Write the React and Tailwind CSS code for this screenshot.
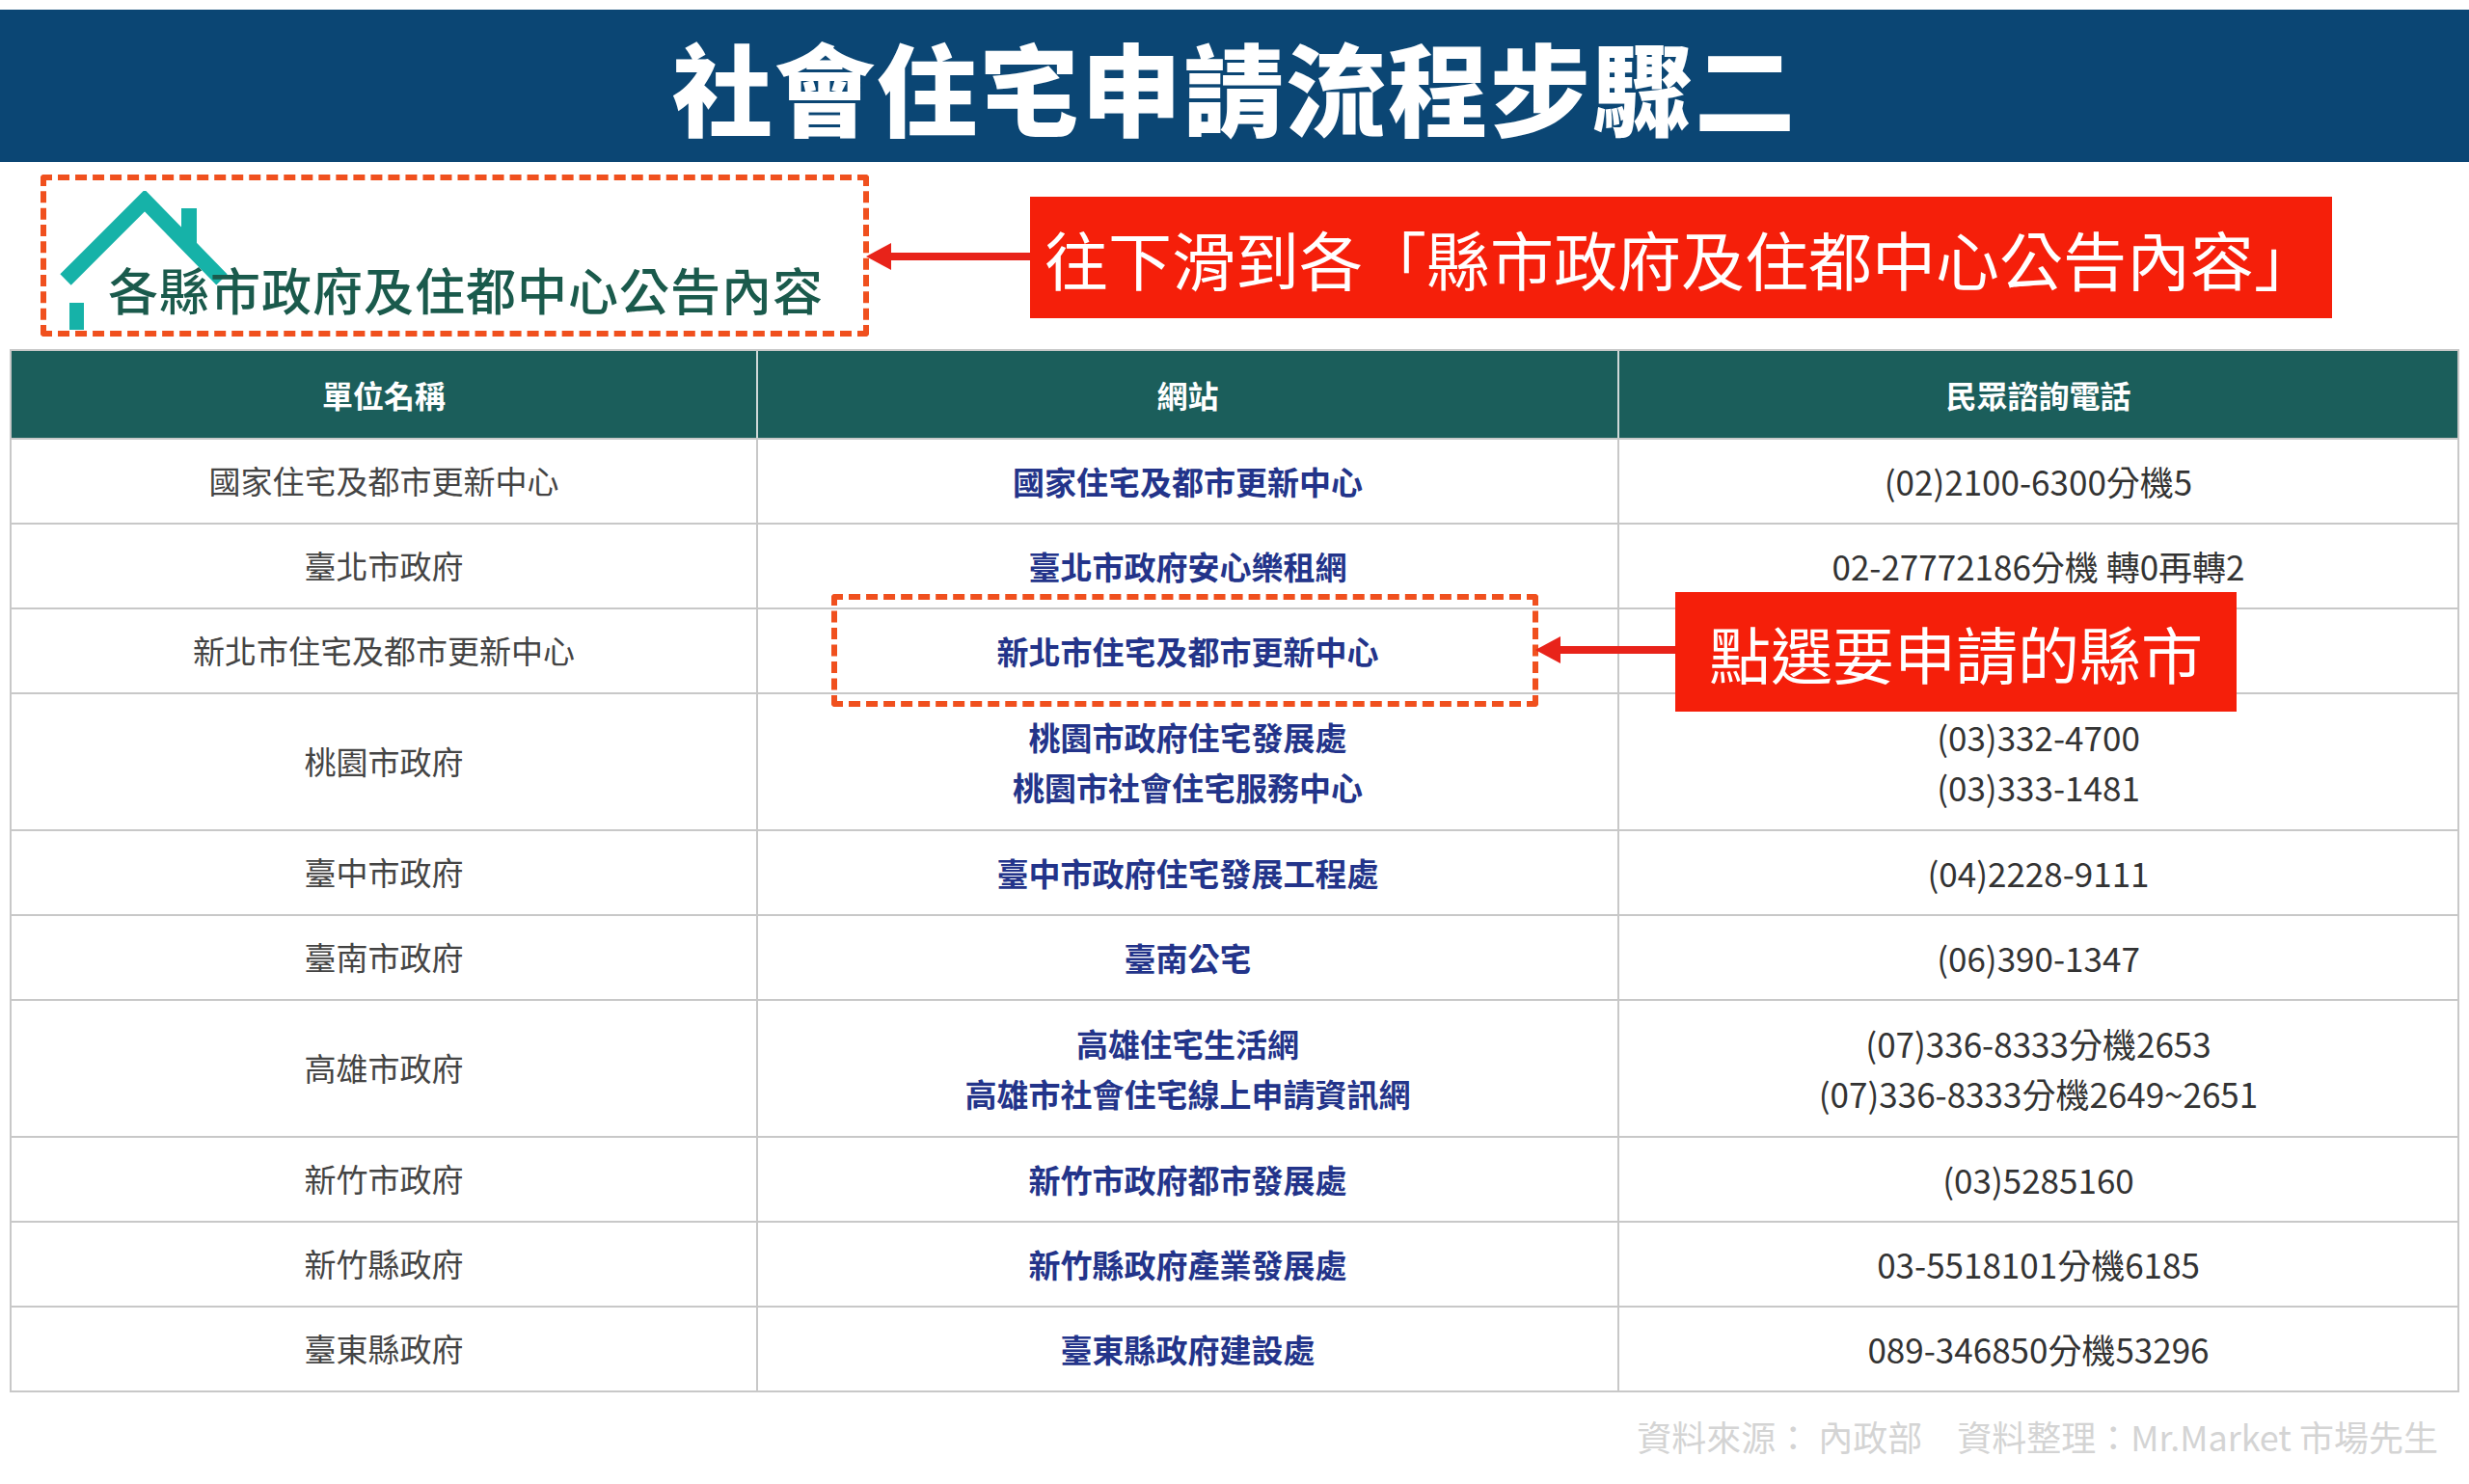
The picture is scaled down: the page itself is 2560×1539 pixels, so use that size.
const rows = [
  { name: '國家住宅及都市更新中心', site: ['國家住宅及都市更新中心'], tel: ['(02)2100-6300分機5'] },
  { name: '臺北市政府', site: ['臺北市政府安心樂租網'], tel: ['02-27772186分機 轉0再轉2'] },
  { name: '新北市住宅及都市更新中心', site: ['新北市住宅及都市更新中心'], tel: [''] },
  { name: '桃園市政府', site: ['桃園市政府住宅發展處', '桃園市社會住宅服務中心'], tel: ['(03)332-4700', '(03)333-1481'] },
  { name: '臺中市政府', site: ['臺中市政府住宅發展工程處'], tel: ['(04)2228-9111'] },
  { name: '臺南市政府', site: ['臺南公宅'], tel: ['(06)390-1347'] },
  { name: '高雄市政府', site: ['高雄住宅生活網', '高雄市社會住宅線上申請資訊網'], tel: ['(07)336-8333分機2653', '(07)336-8333分機2649~2651'] },
  { name: '新竹市政府', site: ['新竹市政府都市發展處'], tel: ['(03)5285160'] },
  { name: '新竹縣政府', site: ['新竹縣政府產業發展處'], tel: ['03-5518101分機6185'] },
  { name: '臺東縣政府', site: ['臺東縣政府建設處'], tel: ['089-346850分機53296'] },
]

const font = { fontFamily: '"Noto Sans CJK TC", "Noto Sans", sans-serif' }

function Arrow({ className }) {
  return (
    <div className={`absolute flex items-center ${className}`}>
      <div className="w-0 h-0 border-y-[14px] border-y-transparent border-r-[26px] border-r-[#e8231a]" />
      <div className="flex-1 h-[8px] bg-[#e8231a]" />
    </div>
  )
}

export default function App() {
  return (
    <div className="relative w-[2560px] h-[1539px] bg-white overflow-hidden" style={font}>
      <div className="pt-[10px]">
        <div className="h-[158px] bg-[#0b4674] flex items-center justify-center">
          <h1 className="text-white font-black text-[104px] leading-none tracking-[2px]">社會住宅申請流程步驟二</h1>
        </div>
      </div>

      {/* section label */}
      <div className="h-[194px] relative">
        <svg className="absolute left-[60px] top-[30px]" width="180" height="144" viewBox="0 0 180 144">
          <polyline points="8,92 90,10 170,92" fill="none" stroke="#16b2a8" strokeWidth="16" strokeLinejoin="miter" />
          <rect x="128" y="18" width="16" height="40" fill="#16b2a8" />
          <rect x="12" y="116" width="15" height="54" fill="#16b2a8" />
        </svg>
        <div className="absolute left-[112px] top-[106px] text-[52px] leading-none font-medium text-[#1a5a4c] tracking-[1px]">各縣市政府及住都中心公告內容</div>
      </div>

      <div className="mx-[10px] border-2 border-[#c8c8c8]">
        <div className="grid grid-cols-[774px_893px_1fr] h-[90px] bg-[#1b5e5b] text-white font-bold text-[32px]">
          <div className="flex items-center justify-center border-r-2 border-[#cfd8d8]">單位名稱</div>
          <div className="flex items-center justify-center border-r-2 border-[#cfd8d8]">網站</div>
          <div className="flex items-center justify-center">民眾諮詢電話</div>
        </div>
        {rows.map((r, i) => (
          <div key={i} className={`grid grid-cols-[774px_893px_1fr] border-t-2 border-[#c8c8c8] ${r.site.length > 1 ? 'h-[142px]' : 'h-[88px]'}`}>
            <div className="flex items-center justify-center border-r-2 border-[#c8c8c8] text-[33px] text-[#444]">{r.name}</div>
            <div className="flex flex-col items-center justify-center border-r-2 border-[#c8c8c8] text-[33px] font-bold text-[#23348a] leading-[52px]">
              {r.site.map(s => <div key={s}>{s}</div>)}
            </div>
            <div className="flex flex-col items-center justify-center text-[35px] text-[#333] leading-[52px]">
              {r.tel.map((t, j) => <div key={j}>{t}</div>)}
            </div>
          </div>
        ))}
      </div>

      <div className="pr-[32px] pt-[18px] text-right text-[36px] text-[#d4d4d4]">資料來源： 內政部　資料整理：Mr.Market 市場先生</div>

      {/* annotations */}
      <div className="absolute left-[42px] top-[181px] w-[859px] h-[168px] border-[6px] border-dashed border-[#f0501e] rounded-[4px]" />
      <Arrow className="left-[898px] top-[252px] w-[172px]" />
      <div className="absolute left-[1068px] top-[204px] w-[1350px] h-[126px] bg-[#f51f0a] flex items-center justify-center text-white text-[66px] leading-none">往下滑到各「縣市政府及住都中心公告內容」</div>

      <div className="absolute left-[862px] top-[616px] w-[733px] h-[117px] border-[6px] border-dashed border-[#f0501e] rounded-[4px]" />
      <Arrow className="left-[1592px] top-[660px] w-[146px]" />
      <div className="absolute left-[1737px] top-[614px] w-[582px] h-[124px] bg-[#f51f0a] flex items-center justify-center text-white text-[64px] leading-none">點選要申請的縣市</div>
    </div>
  )
}
